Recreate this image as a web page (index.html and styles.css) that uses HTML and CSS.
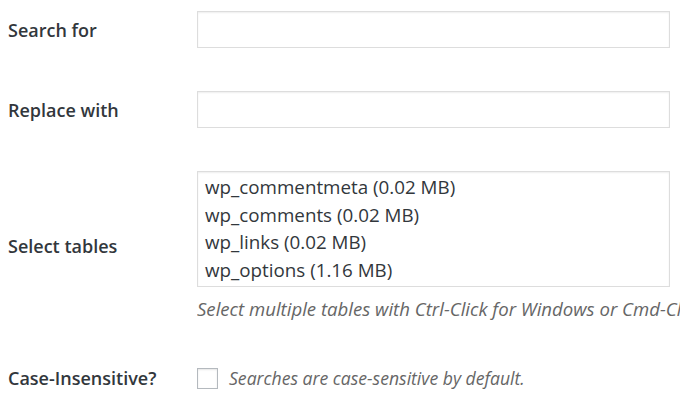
FILE: index.html
```html
<!DOCTYPE html>
<html>
<head>
<meta charset="utf-8">
<link rel="stylesheet" href="styles.css">
</head>
<body>
<div class="form">
  <div class="row row-first">
    <div class="label">Search for</div>
    <div class="field"><div class="input"></div></div>
  </div>
  <div class="row">
    <div class="label">Replace with</div>
    <div class="field"><div class="input"></div></div>
  </div>
  <div class="row">
    <div class="label">Select tables</div>
    <div class="field">
      <div class="listbox">
        <div class="option">wp_commentmeta (0.02 MB)</div>
        <div class="option">wp_comments (0.02 MB)</div>
        <div class="option">wp_links (0.02 MB)</div>
        <div class="option">wp_options (1.16 MB)</div>
      </div>
      <div class="desc desc-tables">Select multiple tables with Ctrl-Click for Windows or Cmd-Click for Mac.</div>
    </div>
  </div>
  <div class="row row-last">
    <div class="label">Case-Insensitive?</div>
    <div class="field field-inline">
      <span class="checkbox"></span>
      <span class="desc">Searches are case-sensitive by default.</span>
    </div>
  </div>
</div>
</body>
</html>
```
FILE: styles.css
```css
html, body {
  margin: 0;
  padding: 0;
  background: #fff;
  overflow: hidden;
}
body {
  font-family: "Open Sans", "Noto Sans", sans-serif;
  color: #23282d;
  width: 680px;
  height: 400px;
}
.form {
  padding: 0 10px 0 8px;
}
.row {
  display: flex;
  align-items: center;
  margin-top: 43px;
}
.row-first {
  margin-top: 11px;
}
.row-last {
  margin-top: 45px;
}
.label {
  width: 189px;
  flex: none;
  font-size: 18px;
  font-weight: 600;
  color: #32373c;
  white-space: nowrap;
}
.field {
  flex: 1;
  min-width: 0;
}
.input {
  height: 35px;
  border: 1px solid #ddd;
  box-shadow: inset 0 1px 2px rgba(0,0,0,0.07);
  background: #fff;
}
.listbox {
  border: 1px solid #ddd;
  box-shadow: inset 0 1px 2px rgba(0,0,0,0.07);
  padding: 2px 7px;
  height: 110px;
  overflow: hidden;
}
.option {
  font-size: 18.8px;
  line-height: 27.5px;
  color: #32373c;
  white-space: nowrap;
}
.desc {
  font-style: italic;
  font-size: 17.6px;
  line-height: 24px;
  color: #666;
  white-space: nowrap;
}
.desc-tables {
  margin-top: 10px;
  margin-right: -10px;
  overflow: hidden;
  font-size: 18.6px;
}
.field-inline {
  display: flex;
  align-items: center;
}
.checkbox {
  width: 19px;
  height: 19px;
  border: 1px solid #b4b9be;
  box-shadow: inset 0 1px 2px rgba(0,0,0,0.1);
  background: #fff;
  margin-right: 11px;
  flex: none;
}
```
